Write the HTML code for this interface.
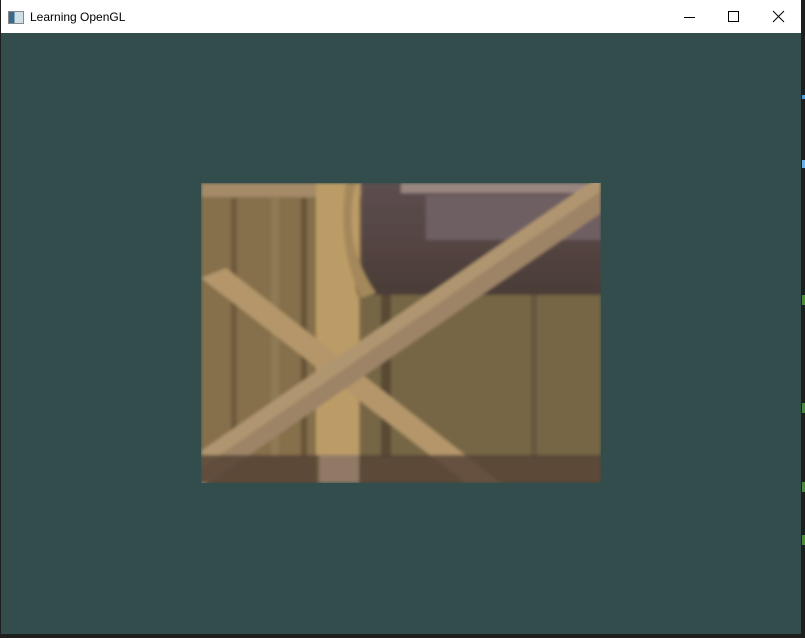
<!DOCTYPE html>
<html><head><meta charset="utf-8"><style>
html,body{margin:0;padding:0;width:805px;height:638px;overflow:hidden;background:#1e1e1e}
#win{position:absolute;left:1px;top:0;width:800px;height:634px;background:#334c4c}
#title{position:absolute;left:0;top:0;width:800px;height:33px;background:#fff;font-family:"Liberation Sans",sans-serif;font-size:12px;color:#000}
#title .t{position:absolute;left:29px;top:10px}
#icon{position:absolute;left:7px;top:11px;width:14px;height:11px;border:1px solid #888;background:linear-gradient(90deg,#3a6a8a 0 40%,#d0e0e8 40%)}
svg.c{position:absolute}
</style></head><body>
<div id="win">
<div id="title"><div id="icon"></div><span class="t">Learning OpenGL</span>
<svg class="c" style="left:682px;top:10px" width="14" height="14"><line x1="1" y1="7.5" x2="12" y2="7.5" stroke="#000"/></svg>
<svg class="c" style="left:726px;top:10px" width="14" height="14"><rect x="1.5" y="1.5" width="10" height="10" fill="none" stroke="#000"/></svg>
<svg class="c" style="left:771px;top:10px" width="14" height="14"><path d="M1 1L12 12M12 1L1 12" stroke="#000"/></svg>
</div>
<svg class="c" style="left:200px;top:183px" width="400" height="300" viewBox="0 0 400 300">
<defs>
<linearGradient id="tr" x1="0" y1="0" x2="0" y2="1"><stop offset="0" stop-color="#5e4e50"/><stop offset="1" stop-color="#4a3c36"/></linearGradient>
<clipPath id="cp"><rect width="400" height="300"/></clipPath>
<filter id="b"><feGaussianBlur stdDeviation="1.5"/></filter>
</defs>
<g clip-path="url(#cp)"><g filter="url(#b)">
<rect width="400" height="300" fill="#7e6a48"/>
<rect x="0" y="0" width="160" height="300" fill="#85704c"/>
<rect x="30" y="15" width="6" height="260" fill="#6e5a3c"/>
<rect x="70" y="15" width="8" height="260" fill="#8e7a54"/>
<rect x="100" y="15" width="6" height="260" fill="#665438"/>
<rect x="160" y="0" width="240" height="115" fill="url(#tr)"/>
<rect x="225" y="12" width="175" height="45" fill="#6e5e62"/>
<rect x="160" y="112" width="240" height="163" fill="#766645"/>
<rect x="180" y="112" width="10" height="163" fill="#5a4a36"/>
<rect x="330" y="112" width="6" height="163" fill="#665640"/>
<rect x="0" y="0" width="160" height="14" fill="#a48a66"/>
<rect x="200" y="0" width="200" height="10" fill="#9a8680"/>
<path d="M115 0H158V90Q150 100 158 115V300H115Z" fill="#bc9c66"/>
<path d="M155 0Q140 60 175 110L160 115Q135 60 145 0Z" fill="#a4885c"/>
<path d="M0 95L25 85L300 300H265Z" fill="#b4966a"/>
<path d="M0 285L400 8V30L0 305Z" fill="#9e8466"/>
<path d="M0 268L400 -8V8L0 285Z" fill="#b09670"/>
<rect x="0" y="272" width="400" height="28" fill="#524034" opacity="0.8"/>
<rect x="118" y="272" width="40" height="28" fill="#9a8470" opacity="0.8"/>
</g></g>
</svg>
</div>
<div style="position:absolute;left:802px;top:95px;width:3px;height:4px;background:#4aa0e0"></div>
<div style="position:absolute;left:802px;top:160px;width:3px;height:8px;background:#6ab0e0"></div>
<div style="position:absolute;left:802px;top:295px;width:3px;height:10px;background:#4a8a3a"></div>
<div style="position:absolute;left:802px;top:403px;width:3px;height:10px;background:#4a8a3a"></div>
<div style="position:absolute;left:802px;top:482px;width:3px;height:10px;background:#4a8a3a"></div>
<div style="position:absolute;left:802px;top:535px;width:3px;height:10px;background:#4a8a3a"></div>
</body></html>
